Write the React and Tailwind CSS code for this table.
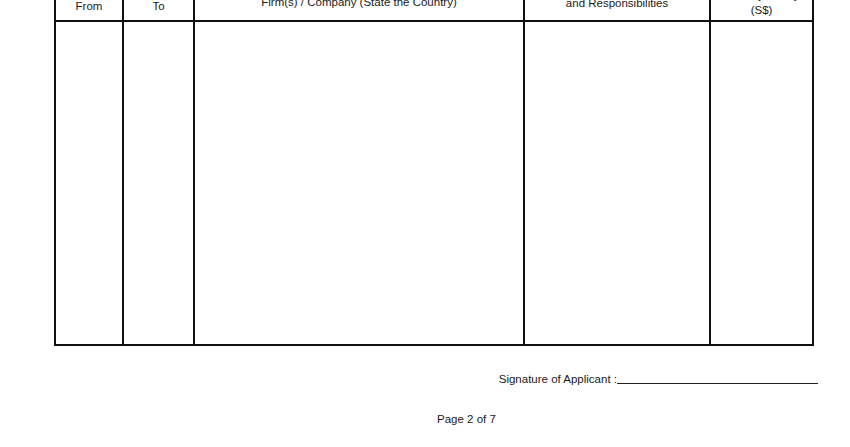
export default function App() {
  const cell = "bg-white";

  return (
    <div
      className="relative w-[850px] h-[447px] overflow-hidden bg-white text-[#1a1a1a] text-[11.5px] leading-[13px]"
      style={{ fontFamily: '"Liberation Sans", Arial, sans-serif' }}
    >
      {/* Employment table (header scrolled partly out of view) */}
      <div className="ml-[54px] mt-[-28px] w-[760px] grid grid-cols-[66px_69px_328px_184px_101px] grid-rows-[46px_322px] gap-[2px] p-[2px] bg-[#111]">
        <div className={`${cell} flex flex-col items-center justify-end pb-[7px]`}>
          <span>From</span>
        </div>
        <div className={`${cell} flex flex-col items-center justify-end pb-[7px]`}>
          <span>To</span>
        </div>
        <div className={`${cell} flex flex-col items-center justify-end pb-[11px] text-center`}>
          <span>Name and Address of Employer</span>
          <span>Firm(s) / Company (State the Country)</span>
        </div>
        <div className={`${cell} flex flex-col items-center justify-end pb-[10px] text-center`}>
          <span>Position Held, Main Duties</span>
          <span>and Responsibilities</span>
        </div>
        <div className={`${cell} flex flex-col items-center justify-end pb-[3px] text-center`}>
          <span className="mb-[2px]">Monthly Salary</span>
          <span>(S$)</span>
        </div>

        <div className={cell}></div>
        <div className={cell}></div>
        <div className={cell}></div>
        <div className={cell}></div>
        <div className={cell}></div>
      </div>

      {/* Signature */}
      <div className="mt-[27px] flex items-end justify-end pr-[32px]">
        <span>Signature of Applicant :</span>
        <div className="w-[201px] h-px bg-[#222] mb-[2px]"></div>
      </div>

      {/* Footer */}
      <div className="mt-[27px] pl-[437px]">Page 2 of 7</div>
    </div>
  );
}
